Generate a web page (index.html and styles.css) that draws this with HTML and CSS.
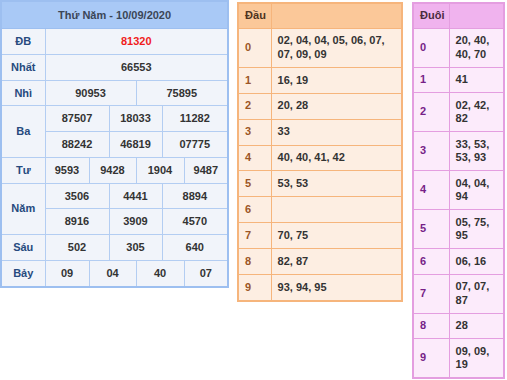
FILE: index.html
```html
<!DOCTYPE html>
<html lang="vi">
<head>
<meta charset="utf-8">
<link rel="stylesheet" href="styles.css">
</head>
<body>
<div class="wrap">
  <table class="kq">
    <colgroup>
      <col class="w44"><col class="w44"><col class="w20"><col class="w27"><col class="w26"><col class="w22"><col class="w44b">
    </colgroup>
    <tr><th colspan="7" class="title">Thứ Năm - 10/09/2020</th></tr>
    <tr><td class="lbl">ĐB</td><td colspan="6" class="db">81320</td></tr>
    <tr><td class="lbl">Nhất</td><td colspan="6">66553</td></tr>
    <tr><td class="lbl">Nhì</td><td colspan="3">90953</td><td colspan="3">75895</td></tr>
    <tr><td class="lbl" rowspan="2">Ba</td><td colspan="2">87507</td><td colspan="2">18033</td><td colspan="2">11282</td></tr>
    <tr><td colspan="2">88242</td><td colspan="2">46819</td><td colspan="2">07775</td></tr>
    <tr><td class="lbl">Tư</td><td>9593</td><td colspan="2">9428</td><td colspan="2">1904</td><td>9487</td></tr>
    <tr><td class="lbl" rowspan="2">Năm</td><td colspan="2">3506</td><td colspan="2">4441</td><td colspan="2">8894</td></tr>
    <tr><td colspan="2">8916</td><td colspan="2">3909</td><td colspan="2">4570</td></tr>
    <tr><td class="lbl">Sáu</td><td colspan="2">502</td><td colspan="2">305</td><td colspan="2">640</td></tr>
    <tr><td class="lbl">Bảy</td><td>09</td><td colspan="2">04</td><td colspan="2">40</td><td>07</td></tr>
  </table>

  <table class="lo dau">
    <colgroup><col class="w33"><col class="w131"></colgroup>
    <tr><th>Đầu</th><th></th></tr>
    <tr><td class="k">0</td><td>02, 04, 04, 05, 06, 07, 07, 09, 09</td></tr>
    <tr><td class="k">1</td><td>16, 19</td></tr>
    <tr><td class="k">2</td><td>20, 28</td></tr>
    <tr><td class="k">3</td><td>33</td></tr>
    <tr><td class="k">4</td><td>40, 40, 41, 42</td></tr>
    <tr><td class="k">5</td><td>53, 53</td></tr>
    <tr><td class="k">6</td><td></td></tr>
    <tr><td class="k">7</td><td>70, 75</td></tr>
    <tr><td class="k">8</td><td>82, 87</td></tr>
    <tr><td class="k">9</td><td>93, 94, 95</td></tr>
  </table>

  <table class="lo duoi">
    <colgroup><col class="w36"><col class="w55"></colgroup>
    <tr><th>Đuôi</th><th></th></tr>
    <tr><td class="k">0</td><td>20, 40, 40, 70</td></tr>
    <tr><td class="k">1</td><td>41</td></tr>
    <tr><td class="k">2</td><td>02, 42, 82</td></tr>
    <tr><td class="k">3</td><td>33, 53, 53, 93</td></tr>
    <tr><td class="k">4</td><td>04, 04, 94</td></tr>
    <tr><td class="k">5</td><td>05, 75, 95</td></tr>
    <tr><td class="k">6</td><td>06, 16</td></tr>
    <tr><td class="k">7</td><td>07, 07, 87</td></tr>
    <tr><td class="k">8</td><td>28</td></tr>
    <tr><td class="k">9</td><td>09, 09, 19</td></tr>
  </table>
</div>
</body>
</html>
```

FILE: styles.css
```css
html, body {
  margin: 0;
  padding: 0;
  background: #ffffff;
}
body {
  font-family: "Liberation Sans", Arial, sans-serif;
  font-size: 11px;
  font-weight: bold;
  color: #333333;
}
.wrap {
  display: flex;
  align-items: flex-start;
}
table {
  border-collapse: collapse;
  table-layout: fixed;
}
th, td {
  line-height: 13px;
  padding: 6px 0;
}

/* Result table */
.kq {
  width: 227px;
  border: 2px solid #9dbff0;
  background: #f1f4fa;
}
.kq td {
  border: 1px solid #b3cdf2;
  text-align: center;
  color: #333333;
  line-height: 12.75px;
}
.kq .title {
  background: #a9c9f6;
  color: #3b4656;
  padding: 7px 0 6px;
  border-bottom: 1px solid #9dbff0;
}
.kq td.lbl {
  color: #264a7e;
}
.kq td.db {
  color: #f01c1c;
}
.w44 { width: 44px; }
.w44b { width: 44px; }
.w20 { width: 20px; }
.w27 { width: 27px; }
.w26 { width: 26px; }
.w22 { width: 22px; }
.w33 { width: 33px; }
.w131 { width: 131px; }
.w36 { width: 36px; }
.w55 { width: 55px; }

/* Loto tables */
.lo {
  margin-top: 2px;
}
.lo th, .lo td {
  text-align: left;
  padding: 5.5px 5px 5.5px 6px;
  line-height: 13.5px;
  vertical-align: middle;
}
.lo th {
  padding-top: 5px;
  padding-bottom: 5px;
}
.dau {
  width: 164px;
  margin-left: 8px;
  border: 2px solid #f6b57c;
  background: #fdeee2;
}
.dau td {
  padding-top: 5.7px;
  padding-bottom: 5.7px;
}
.dau th {
  background: #fbc899;
  color: #4d3321;
  border: 1px solid #f6b57c;
}
.dau td {
  border: 1px solid #f6b57c;
}
.dau td.k {
  color: #9c5626;
}
.duoi {
  width: 91px;
  margin-left: 9px;
  border: 2px solid #e49ee0;
  background: #fcebfb;
}
.duoi th {
  background: #f0b3ee;
  color: #4a2b3e;
  border: 1px solid #e49ee0;
}
.duoi td {
  border: 1px solid #e49ee0;
}
.duoi td.k {
  color: #771f87;
}
```
